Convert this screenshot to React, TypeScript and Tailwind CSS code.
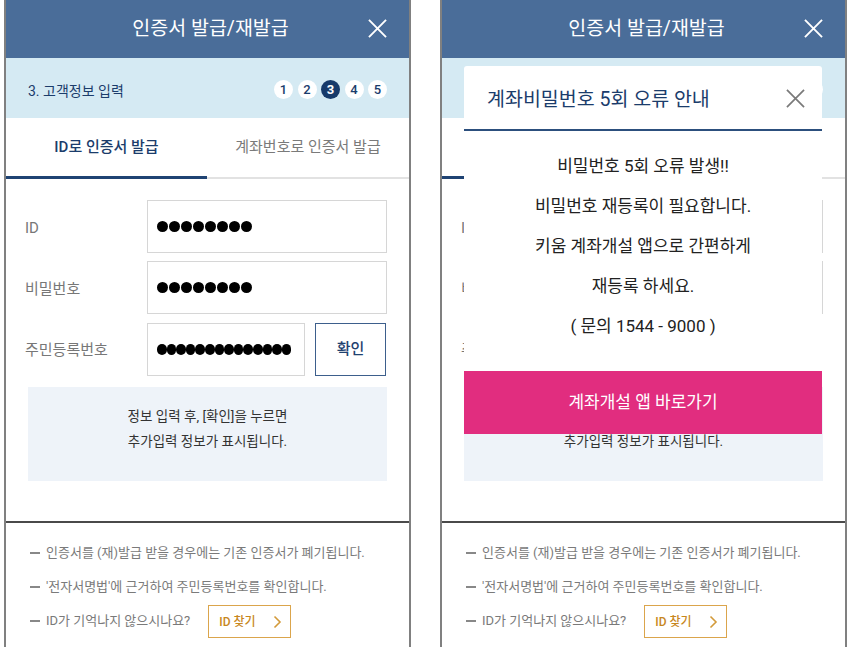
import React from "react";

const FONT = { fontFamily: "Roboto, 'Noto Sans CJK KR', 'Noto Sans', sans-serif" };

function Dots({ n, size }: { n: number; size: "lg" | "sm" }) {
  return (
    <div className="flex items-center">
      {Array.from({ length: n }).map((_, i) => (
        <span
          key={i}
          className={
            size === "lg"
              ? "block w-[11px] h-[11px] rounded-full bg-black mr-[1px]"
              : "block w-[9.6px] h-[10.5px] rounded-full bg-black"
          }
        />
      ))}
    </div>
  );
}

function CloseIcon({ color, size, stroke }: { color: string; size: number; stroke: number }) {
  return (
    <svg width={size} height={size} viewBox="0 0 20 20" fill="none">
      <path d="M1 1 L19 19 M19 1 L1 19" stroke={color} strokeWidth={stroke} strokeLinecap="butt" />
    </svg>
  );
}

function Panel({ modal }: { modal?: boolean }) {
  return (
    <div className="relative w-[407px] h-[647px] border-x-2 border-[#808080] bg-white overflow-hidden shrink-0">
      {/* header */}
      <div className="relative h-[58px] bg-[#4a6d99] flex items-center justify-center">
        <span className="text-white text-[19.5px] ml-[6px]">인증서 발급/재발급</span>
        <div className="absolute right-[22px] top-[19px]">
          <CloseIcon color="#ffffff" size={19} stroke={2} />
        </div>
      </div>
      {/* step bar */}
      <div className="h-[60px] bg-[#d5eaf3] flex items-center justify-between pl-[22px] pr-[22px]">
        <span className="text-[14px] text-[#1b3c6b] pt-[6px]">3. 고객정보 입력</span>
        <div className="flex items-center gap-[4.5px] pt-[3px]">
          {[1, 2, 3, 4, 5].map((s) => (
            <div
              key={s}
              className={
                s === 3
                  ? "w-[19px] h-[19px] rounded-full bg-[#173a6a] text-white text-[13px] font-bold flex items-center justify-center"
                  : "w-[19px] h-[19px] rounded-full bg-white text-[#1b3c6b] text-[13px] font-medium flex items-center justify-center"
              }
            >
              {s}
            </div>
          ))}
        </div>
      </div>
      {/* tabs */}
      <div className="flex h-[61px]">
        <div className="w-[201px] flex items-center justify-center border-b-[3px] border-[#1f4373] text-[15px] text-[#1b3c6b] font-medium">
          ID로 인증서 발급
        </div>
        <div className="flex-1 flex items-center justify-center border-b-[2px] border-[#e2e2e2] text-[15px] text-[#7a7a7a]">
          계좌번호로 인증서 발급
        </div>
      </div>
      {/* form */}
      <div className="pt-[21px] flex flex-col gap-[8px]">
        <div className="flex items-center h-[53px]">
          <div className="w-[141px] pl-[19px] pt-[3px] text-[15px] text-[#777]">ID</div>
          <div className="w-[240px] h-[53px] border border-[#d6d6d6] flex items-center pl-[9px]">
            <Dots n={8} size="lg" />
          </div>
        </div>
        <div className="flex items-center h-[53px]">
          <div className="w-[141px] pl-[19px] pt-[3px] text-[15px] text-[#777]">비밀번호</div>
          <div className="w-[240px] h-[53px] border border-[#d6d6d6] flex items-center pl-[9px]">
            <Dots n={8} size="lg" />
          </div>
        </div>
        <div className="flex items-center h-[53px] mt-[1px]">
          <div className="w-[141px] pl-[19px] pt-[2px] text-[15px] text-[#777]">주민등록번호</div>
          <div className="w-[158px] h-[53px] border border-[#d6d6d6] flex items-center pl-[9px]">
            <Dots n={14} size="sm" />
          </div>
          <div className="ml-[10px] w-[71px] h-[53px] border-[1.5px] border-[#3d5f8c] flex items-center justify-center text-[15px] text-[#1f416f] font-medium">
            확인
          </div>
        </div>
      </div>
      {/* info box */}
      <div className="mx-[22px] mt-[11px] h-[94px] bg-[#eef3f9] pt-[17px] flex flex-col items-center text-[13.5px] text-[#333] leading-[25px]">
        <span>정보 입력 후, [확인]을 누르면</span>
        <span>추가입력 정보가 표시됩니다.</span>
      </div>
      {/* divider */}
      <div className="mt-[40px] h-[2px] bg-[#4a4a4a]" />
      {/* footer */}
      <div className="pt-[13px] pl-[24px] text-[13px] text-[#7a7a7a]">
        <div className="h-[34px] flex items-center">
          <span className="inline-block w-[10px] h-[2px] bg-[#888] mr-[6px]" />
          인증서를 (재)발급 받을 경우에는 기존 인증서가 폐기됩니다.
        </div>
        <div className="h-[34px] flex items-center">
          <span className="inline-block w-[10px] h-[2px] bg-[#888] mr-[6px]" />
          '전자서명법'에 근거하여 주민등록번호를 확인합니다.
        </div>
        <div className="h-[34px] flex items-center">
          <span className="inline-block w-[10px] h-[2px] bg-[#888] mr-[6px]" />
          ID가 기억나지 않으시나요?
          <div className="ml-[18px] mt-[1px] w-[83px] h-[33px] border-[1.5px] border-[#dba54c] flex items-center justify-between pl-[10px] pr-[8px] text-[12px] text-[#c8871d] font-medium">
            <span>ID 찾기</span>
            <svg width="9" height="14" viewBox="0 0 9 14" fill="none">
              <path d="M1.5 1.5 L7 7 L1.5 12.5" stroke="#d39a3a" strokeWidth="1.6" />
            </svg>
          </div>
        </div>
      </div>

      {modal && (
        <div className="absolute top-[66px] left-[22px] w-[358px] bg-white rounded-t-[3px]">
          <div className="h-[65px] border-b-2 border-[#2c4f7d] flex items-center justify-between pl-[23px] pr-[17px]">
            <span className="text-[19.5px] text-[#1b3c6b] pt-[4px]">계좌비밀번호 5회 오류 안내</span>
            <div className="pt-[2px]">
              <CloseIcon color="#7a7a7a" size={19} stroke={1.8} />
            </div>
          </div>
          <div className="pt-[15px] pb-[25px] flex flex-col items-center text-[17px] text-[#222] leading-[40px]">
            <span>비밀번호 5회 오류 발생!!</span>
            <span>비밀번호 재등록이 필요합니다.</span>
            <span>키움 계좌개설 앱으로 간편하게</span>
            <span>재등록 하세요.</span>
            <span>( 문의 1544 - 9000 )</span>
          </div>
          <div className="h-[63px] bg-[#e12d7f] flex items-center justify-center text-white text-[17px]">
            계좌개설 앱 바로가기
          </div>
        </div>
      )}
    </div>
  );
}

export default function App() {
  return (
    <div className="w-[854px] h-[647px] bg-white flex pl-[4px] gap-[29px] overflow-hidden" style={FONT}>
      <Panel />
      <Panel modal />
    </div>
  );
}
